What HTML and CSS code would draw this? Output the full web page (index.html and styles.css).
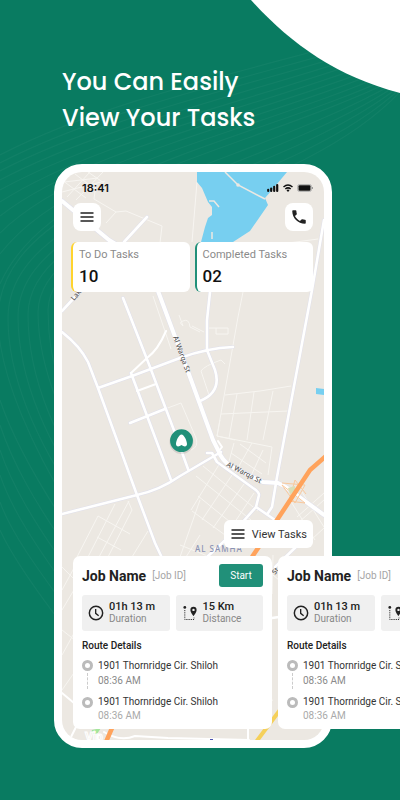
FILE: index.html
```html
<!DOCTYPE html>
<html lang="en">
<head>
<meta charset="utf-8">
<meta name="viewport" content="width=device-width, initial-scale=1">
<title>View Your Tasks</title>
<link rel="stylesheet" href="styles.css">
</head>
<body>
<svg width="0" height="0" class="sprite" aria-hidden="true">
  <symbol id="menu" viewBox="0 0 14 12"><path d="M0.5 2H13.5M0.5 6H13.5M0.5 10H13.5" fill="none" stroke="#222" stroke-width="1.4"/></symbol>
  <symbol id="clock" viewBox="0 0 24 24"><circle cx="12" cy="12" r="10" fill="none" stroke="#222" stroke-width="2.2"/><path d="M11.5 6V12.5L16 16" fill="none" stroke="#222" stroke-width="2"/></symbol>
  <symbol id="route" viewBox="0 0 14 16"><circle cx="1.8" cy="2.4" r="1.4" fill="#222"/><path d="M1.8 5V14.5H11V12.6" fill="none" stroke="#333" stroke-width="1" stroke-dasharray="1.2 1"/><path d="M10.5 1.8a3.1 3.1 0 0 0-3.1 3.1c0 2.2 3.1 6.1 3.1 6.1s3.1-3.9 3.1-6.1a3.1 3.1 0 0 0-3.1-3.1zm0 4.3a1.2 1.2 0 1 1 0-2.4 1.2 1.2 0 0 1 0 2.4z" fill="#222" fill-rule="evenodd"/></symbol>
</svg>

<svg class="backdrop" viewBox="0 0 400 800" preserveAspectRatio="xMidYMin slice" aria-hidden="true">
  <g fill="none" stroke="#fff" stroke-opacity=".04" stroke-width="1.2">
    <path d="M0 155C110 98 260 68 400 28"/>
    <path d="M0 163C110 106 260 76 400 33"/>
    <path d="M0 171C110 114 260 84 400 38"/>
    <path d="M0 180C110 122 260 92 400 43"/>
    <path d="M0 190C110 130 260 100 400 48"/>
    <path d="M0 202C100 138 260 108 400 53"/>
    <path d="M0 216C90 146 260 116 400 58"/>
    <path d="M0 233C80 154 260 124 400 63"/>
    <path d="M0 254C70 162 260 132 400 68"/>
    <path d="M0 284C50 170 260 140 400 73"/>
    <path d="M90 540C30 450-2 370-2 318C0 190 240 156 400 77"/>
    <path d="M90 520C40 450 8 380 8 318C8 200 250 168 400 80"/>
    <path d="M90 500C50 450 18 380 18 316C20 205 260 178 400 83"/>
    <path d="M90 480C60 450 28 380 28 314C30 210 270 188 400 86"/>
    <path d="M90 460C70 440 38 370 38 312C40 215 280 198 400 89"/>
    <path d="M90 440C70 420 48 370 48 310C50 220 290 208 400 92"/>
    <path d="M90 560C30 475 10 430 0 400M90 580C30 500 10 455 0 425M90 600C30 520 10 480 0 450M90 620C30 540 10 505 0 475M90 640C30 560 10 530 0 502M90 660C30 585 10 552 0 530"/>
  </g>
  <path d="M251 0C290 43 335 76 400 93V0Z" fill="#fff"/>
</svg>

<header class="hero">
  <h1>You Can Easily<br>View Your Tasks</h1>
</header>

<main class="phone">
  <svg class="map" viewBox="62 172 262 568" preserveAspectRatio="xMidYMid slice" role="img" aria-label="Map">
    <rect x="62" y="172" width="262" height="568" fill="#ece8e2"/>
    <g fill="none" stroke="#f7f5f1" stroke-width="1">
      <path d="M64 182L98 178M62 192L105 181M67 197L90 172M76 200L103 172M62 180L86 198M75 174L96 190M88 172L104 183M96 184L94 199L116 212L106 223M116 212L126 211L162 226L160 243M197 182L192 242"/>
      <path d="M153 296L171 349M179 315L183 326Q178 322 183 321Q189 318 190 327L200 332M243 292L238 317L217 436L235 440M192 326L204 332M209 328H228V334H216V328M209 395L201 371Q204 366 221 360L225 364M225 395L260 391L291 386M221 414L288 411M237 394L229 438M254 392L247 440M273 391L263 440M165 409L181 403L196 438Q199 447 191 450M281 244L318 239"/>
      <path d="M220 420L217 436L272 447L268 475M234 443L228 465M240 444L266 463M231 453L262 474M225 460L240 470M252 443L235 473M263 450L250 478M203 466L258 511M196 476L251 520M198 496L240 530M192 511L225 535M220 463L191 510M232 475L202 520M244 484L213 528M254 493L225 537"/>
      <path d="M98 516L77 557M98 516L130 534M115 504L88 557M129 501L99 557M132 510L108 557M97 537L121 550M128 501L132 510M148 531L132 557M200 500L180 557M200 535L186 557M180 545L210 557M273 555L272 594M262 566L279 580M62 567L85 590M62 590L80 557M62 610L84 573M62 630L85 648M62 655L84 615M62 690L76 670M273 700L262 704"/>
      <path d="M290 500L315 540M302 492L324 527M297 517L324 493M290 530L324 500M311 540L324 528"/>
    </g>
    <path d="M197 172V182L202 188L208 202L212 207V215L208 218L205 227L201 242V252H215L233 242L250 231L268 205L265 198L272 190L287 172Z" fill="#77cff0"/>
    <path d="M225 172L238 185L265 199M209 201H214L219 207M212 232V239" fill="none" stroke="#ece8e2" stroke-width="1.5"/>
    <circle cx="238" cy="185" r="1.8" fill="#ece8e2"/>
    <path d="M316 388L324 389V395L316 394Z" fill="#77cff0"/>
    <path d="M92 730L101 728L97 734L91 733Z" fill="#a4e59b"/>
    <g fill="none" stroke-linejoin="round" stroke-linecap="round">
      <g stroke="#e0e0eb">
        <path stroke-width="5" d="M62 201L109 240Q147 262 158 291L190 377L213 440L218 450Q222 461 232 467L263 482L278 483Q285 486 290 490L324 515"/>
        <path stroke-width="3.6" d="M62 332Q80 346 88 362L98 388L137 495L155 543L163 560M62 514L137 495Q160 490 180 476L221 452M123 298L150 367L175 433L188 469M98 388L132 376L180 358Q207 348 233 347M210 292L207 320V350L215 370Q222 392 200 401M124 242L147 217M62 311L85 286M131 373L171 480M130 423L165 409M324 220L312 290L277 477L272 507L268 513M207 453L212 453L217 462L253 488Q259 492 259 495L256 507L275 520M256 507L233 533L207 557M298 545L275 567"/>
      </g>
      <g stroke="#fff">
        <path stroke-width="4" d="M62 201L109 240Q147 262 158 291L190 377L213 440L218 450Q222 461 232 467L263 482L278 483Q285 486 290 490L324 515"/>
        <path stroke-width="2.6" d="M62 332Q80 346 88 362L98 388L137 495L155 543L163 560M62 514L137 495Q160 490 180 476L221 452M123 298L150 367L175 433L188 469M98 388L132 376L180 358Q207 348 233 347M210 292L207 320V350L215 370Q222 392 200 401M124 242L147 217M62 311L85 286M131 373L171 480M130 423L165 409M324 220L312 290L277 477L272 507L268 513M207 453L212 453L217 462L253 488Q259 492 259 495L256 507L275 520M256 507L233 533L207 557M298 545L275 567M272 618L279 617"/>
        <path stroke-width="2" d="M166 331Q158 350 147 358L131 373M137 391L156 384M218 441L222 447L218 452M62 693L74 703M76 727L69 741M104 732Q120 742 135 736L168 738L249 740M248 729V740"/>
      </g>
    </g>
    <path d="M282 483L305 485L295 503L282 485L305 503L289 501L295 480L306 494" fill="none" stroke="#f9c99d" stroke-width="1"/>
    <path d="M288 488L295 486L295 492L290 494Z" fill="#d9dfb8"/>
    <path d="M326 456L310 470L277 520L252 557M112 728L106 742" fill="none" stroke="#ffa35c" stroke-width="4.5"/>
    <path d="M280 710L256 742" fill="none" stroke="#f5d05a" stroke-width="4"/>
    <path d="M210 739.500H213" stroke="#4a52b0" stroke-width="1"/>
    <g class="road-label">
      <text transform="translate(173 337) rotate(70)">Al Warqa St</text>
      <text transform="translate(226 466) rotate(27)">Al Warqa St</text>
      <text transform="translate(74 301) rotate(-50)">Lake</text>
      <text transform="translate(275 575) rotate(-50)">St</text>
    </g>
    <text class="district" x="195" y="552">AL SAMHA</text>
    <text class="vip" x="85" y="741">Vip</text>
    <circle cx="181.500" cy="442" r="12" fill="#000" opacity=".1"/>
    <circle cx="181.500" cy="440.700" r="11.400" fill="#219079"/>
    <path d="M181.500 434.600C184 434.600 187 441 187 444C187 447 184 447 181.500 445C179 447 176 447 176 444C176 441 179 434.600 181.500 434.600Z" fill="#fff"/>
  </svg>

  <div class="screen">
    <div class="status">
      <span>18:41</span>
      <svg width="47" height="10" viewBox="0 0 47 10" aria-label="Signal, Wi-Fi and battery">
        <path d="M2.200 8V6.800M5.200 8V5.500M8.200 8V3.800M11.200 8V2" stroke="#111" stroke-width="2.200" stroke-linecap="round"/>
        <path d="M17.500 4Q22 0 26.500 4M19.300 6Q22 3.700 24.700 6" fill="none" stroke="#111" stroke-width="1.500"/><path d="M20.500 7.200Q22 6 23.500 7.200L22 8.900Z" fill="#111"/>
        <rect x="31.500" y="1.500" width="14" height="7" rx="2" fill="none" stroke="#aaa" stroke-width=".8"/><rect x="32.500" y="2.200" width="12" height="5.600" rx="1" fill="#111"/><path d="M46.500 4V6" stroke="#888" stroke-width=".8"/>
      </svg>
    </div>
    <nav class="toolbar">
      <button class="tool" aria-label="Menu"><svg width="14" height="12"><use href="#menu"/></svg></button>
      <button class="tool" aria-label="Call"><svg width="18" height="18" viewBox="0 0 24 24"><path d="M6.620 10.790c1.440 2.830 3.760 5.140 6.590 6.590l2.200-2.200c.27-.27.67-.36 1.020-.24 1.120.37 2.330.57 3.570.57.55 0 1 .45 1 1V20c0 .55-.45 1-1 1-9.390 0-17-7.610-17-17 0-.55.45-1 1-1h3.500c.55 0 1 .45 1 1 0 1.250.2 2.450.57 3.570.11.35.03.74-.25 1.020z" fill="#222"/></svg></button>
    </nav>
    <section class="stats">
      <div class="stat todo"><span>To Do Tasks</span><strong>10</strong></div>
      <div class="stat done"><span>Completed Tasks</span><strong>02</strong></div>
    </section>
    <button class="view"><svg width="14" height="12"><use href="#menu"/></svg>View Tasks</button>
    <section class="cards">
      <article class="card">
        <header><h2>Job Name</h2><small>[Job ID]</small><button>Start</button></header>
        <div class="facts">
          <div class="fact"><svg width="16" height="16"><use href="#clock"/></svg><p><b>01h 13 m</b><span>Duration</span></p></div>
          <div class="fact"><svg width="16" height="16"><use href="#route"/></svg><p><b>15 Km</b><span>Distance</span></p></div>
        </div>
        <h3>Route Details</h3>
        <ol>
          <li><b>1901 Thornridge Cir. Shiloh</b><time>08:36 AM</time></li>
          <li><b>1901 Thornridge Cir. Shiloh</b><time>08:36 AM</time></li>
        </ol>
      </article>
      <article class="card">
        <header><h2>Job Name</h2><small>[Job ID]</small><button>Start</button></header>
        <div class="facts">
          <div class="fact"><svg width="16" height="16"><use href="#clock"/></svg><p><b>01h 13 m</b><span>Duration</span></p></div>
          <div class="fact"><svg width="16" height="16"><use href="#route"/></svg><p><b>15 Km</b><span>Distance</span></p></div>
        </div>
        <h3>Route Details</h3>
        <ol>
          <li><b>1901 Thornridge Cir. Shiloh</b><time>08:36 AM</time></li>
          <li><b>1901 Thornridge Cir. Shiloh</b><time>08:36 AM</time></li>
        </ol>
      </article>
    </section>
  </div>
</main>
</body>
</html>
```
FILE: styles.css
```css
*, ::before, ::after { box-sizing: border-box; margin: 0; padding: 0; }

body {
  position: relative;
  display: flex;
  flex-direction: column;
  min-height: 100vh;
  overflow-x: hidden;
  background: #097b61;
  color: #222;
  font-family: Roboto, sans-serif;
  font-size: 10px;
}

button { border: 0; font: inherit; cursor: pointer; }
svg { display: block; flex: none; }
.sprite { position: absolute; }
.backdrop { position: absolute; inset: 0; width: 100%; height: 100%; }

.hero { position: relative; padding: 64px 62px 28px; }
.hero h1 {
  color: #fff;
  font: 500 24px/36px Poppins, Inter, sans-serif;
  white-space: nowrap;
}

.phone {
  position: relative;
  display: flex;
  flex: 1;
  margin: 0 68px 52px 54px;
  border: 8px solid #fff;
  border-radius: 28px;
  background: #fff;
}
.map {
  position: absolute;
  inset: 0;
  width: 100%;
  height: 100%;
  border-radius: 20px;
}
.road-label { fill: #555; font: 500 7px "Noto Sans", sans-serif; }
.district { fill: #8b93b5; font: 500 8px "Noto Sans", sans-serif; letter-spacing: 1px; }
.vip { fill: #ece8e2; stroke: #fff; stroke-width: 1px; font: bold 12px Roboto, sans-serif; }

.screen {
  position: relative;
  display: flex;
  flex: 1;
  flex-direction: column;
  min-width: 0;
  padding: 0 11px 11px;
}

.status {
  display: flex;
  align-items: center;
  justify-content: space-between;
  height: 31px;
  padding: 0 0 0 9px;
  color: #111;
  font: 600 11px Inter, sans-serif;
}
.toolbar { display: flex; justify-content: space-between; }
.tool {
  display: grid;
  place-items: center;
  width: 28px;
  height: 28px;
  border-radius: 8px;
  background: #fff;
}

.stats { display: flex; gap: 5px; margin: 11px 0 auto -2px; }
.stat {
  flex: 1;
  height: 50px;
  padding: 4px 0 0 6px;
  border-left: 2px solid;
  border-radius: 6px;
  background: #fff;
  white-space: nowrap;
}
.stat span { display: block; color: #8a8a8a; font-size: 11px; line-height: 17px; }
.stat strong { display: block; color: #111; font-size: 17px; font-weight: 500; line-height: 26px; }
.todo { border-color: #ffd42e; }
.done { border-color: #219079; }

.view {
  display: flex;
  align-items: center;
  align-self: flex-end;
  gap: 7px;
  height: 28px;
  margin: 16px 0 8px;
  padding: 0 6px 0 7px;
  border-radius: 6px;
  background: #fff;
  color: #333;
  font-size: 11px;
}

.cards {
  display: flex;
  gap: 6px;
  margin-right: -87px;
  overflow-x: auto;
  scrollbar-width: none;
}
.card {
  flex: 0 0 199px;
  height: 173px;
  padding: 8px 9px;
  border-radius: 7px;
  background: #fff;
}
.card header { display: flex; align-items: center; height: 23px; margin-bottom: 8px; }
.card h2 { font-size: 14px; font-weight: 700; }
.card small { margin-left: 6px; color: #a5a5a5; font-size: 10px; }
.card header button {
  width: 44px;
  height: 23px;
  margin-left: auto;
  border-radius: 3px;
  background: #219079;
  color: #fff;
}
.facts { display: flex; gap: 6px; margin-bottom: 8px; }
.fact {
  display: flex;
  flex: 1;
  align-items: center;
  gap: 5px;
  height: 36px;
  padding: 0 6px;
  border-radius: 3px;
  background: #f0f0f0;
}
.fact b { display: block; font-size: 11px; font-weight: 500; line-height: 12px; }
.fact span { display: block; color: #888; line-height: 12px; }
.card h3 { font-size: 10px; font-weight: 500; line-height: 13px; margin-bottom: 6px; }

.card ol { list-style: none; }
.card li { position: relative; padding-left: 16px; line-height: 15px; }
.card li + li { margin-top: 7px; line-height: 14px; }
.card li b { display: block; color: #333; font-weight: 400; }
.card li time { display: block; color: #8a8a8a; }
.card li + li time { color: #aaa; }
.card li::before {
  content: "";
  position: absolute;
  top: 2px;
  left: 0;
  width: 11px;
  height: 11px;
  border: 3px solid #bbb;
  border-radius: 50%;
  background: linear-gradient(#fff, #fff) center / 5px 5px no-repeat #bbb;
}
.card li:first-child::after {
  content: "";
  position: absolute;
  top: 15px;
  left: 5px;
  height: 16px;
  border-left: 1px dashed #ccc;
}
```
